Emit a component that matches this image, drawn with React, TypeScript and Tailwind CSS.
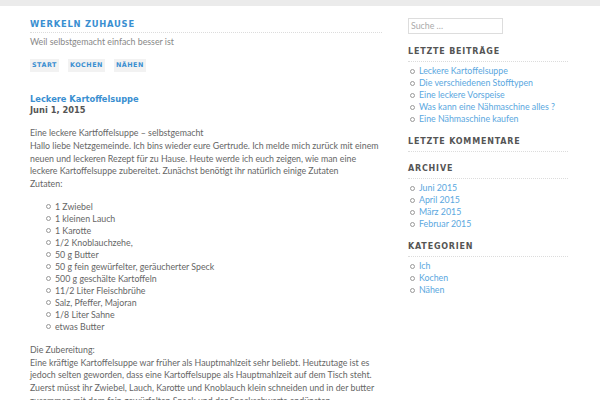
import React from 'react';

const HEAD = { fontFamily: '"DejaVu Sans", sans-serif' };
const BODY = { fontFamily: 'Lato, "Open Sans", sans-serif' };

const ZUTATEN = [
  '1 Zwiebel',
  '1 kleinen Lauch',
  '1 Karotte',
  '1/2 Knoblauchzehe,',
  '50 g Butter',
  '50 g fein gewürfelter, geräucherter Speck',
  '500 g geschälte Kartoffeln',
  '11/2 Liter Fleischbrühe',
  'Salz, Pfeffer, Majoran',
  '1/8 Liter Sahne',
  'etwas Butter',
];

const WIDGETS: { title: string; items: string[] }[] = [
  {
    title: 'Letzte Beiträge',
    items: [
      'Leckere Kartoffelsuppe',
      'Die verschiedenen Stofftypen',
      'Eine leckere Vorspeise',
      'Was kann eine Nähmaschine alles ?',
      'Eine Nähmaschine kaufen',
    ],
  },
  { title: 'Letzte Kommentare', items: [] },
  { title: 'Archive', items: ['Juni 2015', 'April 2015', 'März 2015', 'Februar 2015'] },
  { title: 'Kategorien', items: ['Ich', 'Kochen', 'Nähen'] },
];

function Bullet() {
  return <span className="w-[5px] h-[5px] rounded-full border border-[#999] shrink-0" />;
}

export default function App() {
  return (
    <div className="w-[600px] h-[400px] overflow-hidden bg-white">
      <div className="h-[6px] bg-[#ebebeb]" />

      <div className="flex pl-[30px] pt-[12px]">
        {/* Inhalt */}
        <main className="w-[352px] shrink-0">
          <header>
            <h1 style={HEAD} className="text-[8.4px] font-bold uppercase tracking-[0.09em] text-[#3a8fd1] leading-[12px] pb-[2px] border-b border-dotted border-[#dcdcdc]">
              Werkeln Zuhause
            </h1>
            <p style={BODY} className="text-[8.8px] text-[#888] mt-[3px] leading-[12px]">
              Weil selbstgemacht einfach besser ist
            </p>
          </header>

          <nav className="flex gap-[9px] mt-[11px]">
            {['Start', 'Kochen', 'Nähen'].map(n => (
              <span key={n} style={HEAD} className="bg-[#f2f2f2] px-[2px] h-[13px] flex items-center text-[6.4px] font-bold uppercase tracking-[0.08em] text-[#3a8fd1]">
                {n}
              </span>
            ))}
          </nav>

          <article className="mt-[21px]">
            <h2 style={HEAD} className="text-[8.3px] font-bold text-[#3a8fd1] leading-[12px]">Leckere Kartoffelsuppe</h2>
            <div style={HEAD} className="text-[8.3px] font-bold text-[#555] leading-[11px]">Juni 1, 2015</div>

            <div style={BODY} className="mt-[11px] text-[8.8px] text-[#666] leading-[12.75px]">
              <p>
                Eine leckere Kartfoffelsuppe – selbstgemacht<br />
                Hallo liebe Netzgemeinde. Ich bins wieder eure Gertrude. Ich melde mich zurück mit einem neuen und leckeren Rezept für zu Hause. Heute werde ich euch zeigen, wie man eine leckere Kartoffelsuppe zubereitet. Zunächst benötigt ihr natürlich einige Zutaten<br />
                Zutaten:
              </p>
              <ul className="mt-[10px] pl-[16px] leading-[12px]">
                {ZUTATEN.map(z => (
                  <li key={z} className="flex items-center gap-[4px]">
                    <Bullet />
                    <span>{z}</span>
                  </li>
                ))}
              </ul>
              <p className="mt-[11px]">
                Die Zubereitung:<br />
                Eine kräftige Kartoffelsuppe war früher als Hauptmahlzeit sehr beliebt. Heutzutage ist es jedoch selten geworden, dass eine Kartoffelsuppe als Hauptmahlzeit auf dem Tisch steht. Zuerst müsst ihr Zwiebel, Lauch, Karotte und Knoblauch klein schneiden und in der butter zusammen mit dem fein gewürfelten Speck und der Speckschwarte andünsten.
              </p>
            </div>
          </article>
        </main>

        {/* Seitenleiste */}
        <aside className="ml-[26px] w-[160px] shrink-0">
          <div style={BODY} className="w-[95px] h-[16px] border border-[#ddd] flex items-center px-[2px] text-[8.8px] text-[#aaa]">
            Suche …
          </div>

          {WIDGETS.map((w, idx) => (
            <section key={w.title} className={idx === 0 ? 'mt-[12px]' : 'mt-[11px]'}>
              <h3 style={HEAD} className="text-[8px] font-bold uppercase tracking-[0.1em] text-[#555] leading-[12px] pb-[3px] border-b border-dotted border-[#dcdcdc]">
                {w.title}
              </h3>
              {w.items.length > 0 && (
                <ul style={BODY} className="mt-[3px] text-[8.8px] text-[#5aa7e0] leading-[12px]">
                  {w.items.map(i => (
                    <li key={i} className="flex items-center gap-[4px] pl-[2px]">
                      <Bullet />
                      <span>{i}</span>
                    </li>
                  ))}
                </ul>
              )}
            </section>
          ))}
        </aside>
      </div>
    </div>
  );
}
